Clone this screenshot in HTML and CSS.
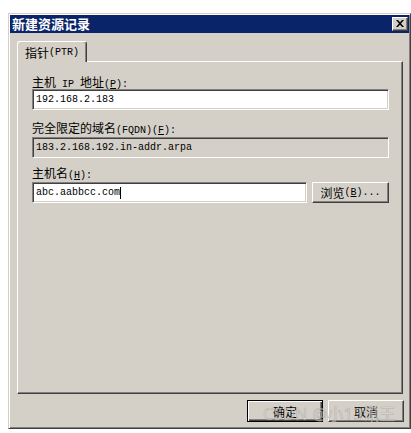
FILE: index.html
```html
<!DOCTYPE html>
<html lang="zh-CN">
<head>
<meta charset="utf-8">
<title>新建资源记录</title>
<link rel="stylesheet" href="styles.css">
</head>
<body>
<div class="dialog">
  <div class="titlebar">
    <span class="title">新建资源记录</span>
    <div class="close">
      <svg width="8" height="7" viewBox="0 0 8 7"><path d="M0 0h2l2 2.2L6 0h2L5 3.5 8 7H6L4 4.8 2 7H0l3-3.5z" fill="#000"/></svg>
    </div>
  </div>
  <div class="body">
    <div class="tabs">
      <div class="tab">指针<span class="m">(PTR)</span></div>
    </div>
    <div class="panel">
      <div class="label l1">主机<span class="m"> IP </span>地址<span class="m">(<u>P</u>):</span></div>
      <div class="field"><span class="m">192.168.2.183</span></div>
      <div class="label l2">完全限定的域名<span class="m">(FQDN)(<u>F</u>):</span></div>
      <div class="field readonly"><span class="m">183.2.168.192.in-addr.arpa</span></div>
      <div class="label l3">主机名<span class="m">(<u>H</u>):</span></div>
      <div class="row">
        <div class="field grow"><span class="m">abc.aabbcc.com</span><span class="caret"></span></div>
        <div class="btn browse">浏览<span class="m">(<u>B</u>)...</span></div>
      </div>
    </div>
    <div class="buttons">
      <div class="btn default">确定</div>
      <div class="btn">取消</div>
    </div>
  </div>
  <div class="watermark">CSDN @小13讯王</div>
</div>
</body>
</html>
```
FILE: styles.css
```css
* { box-sizing: border-box; }
body {
  margin: 0;
  background: #fff;
  font-family: "Noto Sans CJK SC", sans-serif;
  font-size: 12px;
  color: #000;
}
.m {
  font-family: "Liberation Mono", monospace;
  font-size: 10px;
}
u { text-decoration: underline; text-underline-offset: 1px; }

.dialog {
  position: relative;
  margin: 13px 0 0 8px;
  width: 403px;
  height: 416px;
  background: #d4d0c8;
  border: 1px solid;
  border-color: #d4d0c8 #404040 #404040 #d4d0c8;
  box-shadow: inset 1px 1px #fff, inset -1px -1px #808080;
  padding: 1px;
  display: flex;
  flex-direction: column;
}
.titlebar {
  height: 18px;
  background: #0a246a;
  color: #fff;
  display: flex;
  align-items: center;
  justify-content: space-between;
  padding: 0 1px 0 2px;
}
.title {
  font-weight: bold;
  font-size: 13px;
  line-height: 18px;
}
.close {
  width: 16px;
  height: 14px;
  background: #d4d0c8;
  border: 1px solid;
  border-color: #fff #404040 #404040 #fff;
  box-shadow: inset -1px -1px #808080;
  display: flex;
  align-items: center;
  justify-content: center;
}
.close svg { display: block; margin-top: -1px; }

.body {
  flex: 1;
  display: flex;
  flex-direction: column;
  padding: 8px 6px 0 7px;
}
.tabs {
  display: flex;
  height: 20px;
}
.tab {
  position: relative;
  z-index: 1;
  height: 21px;
  padding: 0 7px 0 7px;
  background: #d4d0c8;
  border: 1px solid;
  border-color: #fff #404040 #d4d0c8 #fff;
  border-bottom: none;
  box-shadow: inset -1px 0 #808080;
  border-radius: 3px 3px 0 0;
  line-height: 19px;
  display: flex;
  align-items: center;
}
.panel {
  height: 333px;
  border: 1px solid;
  border-color: #fff #404040 #404040 #fff;
  box-shadow: inset -1px -1px #808080;
  padding: 13px 13px 0 14px;
  display: flex;
  flex-direction: column;
}
.label {
  line-height: 14px;
  height: 14px;
  white-space: pre;
}
.l2 { margin-top: 11px; }
.l3 { margin-top: 8px; }
.field {
  height: 21px;
  background: #fff;
  border: 1px solid;
  border-color: #808080 #fff #fff #808080;
  box-shadow: inset 1px 1px #404040, inset -1px -1px #d4d0c8;
  padding: 0 3px;
  display: flex;
  align-items: center;
}
.label + .field, .label + .row { margin-top: 2px; }
.l1 + .field { margin-top: 0; }
.readonly { background: #d4d0c8; }
.row {
  display: flex;
  gap: 5px;
}
.grow { flex: 1; }
.caret {
  width: 1px;
  height: 12px;
  background: #000;
  margin-left: 0;
}
.btn {
  width: 76px;
  height: 21px;
  background: #d4d0c8;
  border: 1px solid;
  border-color: #fff #404040 #404040 #fff;
  box-shadow: inset -1px -1px #808080;
  display: flex;
  align-items: center;
  justify-content: center;
  white-space: pre;
}
.browse { width: 77px; }
.buttons {
  display: flex;
  justify-content: flex-end;
  gap: 5px;
  margin-top: 6px;
  margin-right: -1px;
}
.buttons .btn { height: 22px; }
.btn.default {
  border: 1px solid #000;
  box-shadow: inset 1px 1px #fff, inset -1px -1px #404040, inset -2px -2px #808080;
}
.watermark {
  position: absolute;
  left: 254px;
  top: 387px;
  font-family: "Noto Sans", "Noto Sans CJK SC", sans-serif;
  font-size: 16px;
  color: rgba(235, 233, 230, 0.55);
  -webkit-text-stroke: 0.6px rgba(140, 140, 140, 0.55);
  letter-spacing: 0.5px;
  pointer-events: none;
}
```
